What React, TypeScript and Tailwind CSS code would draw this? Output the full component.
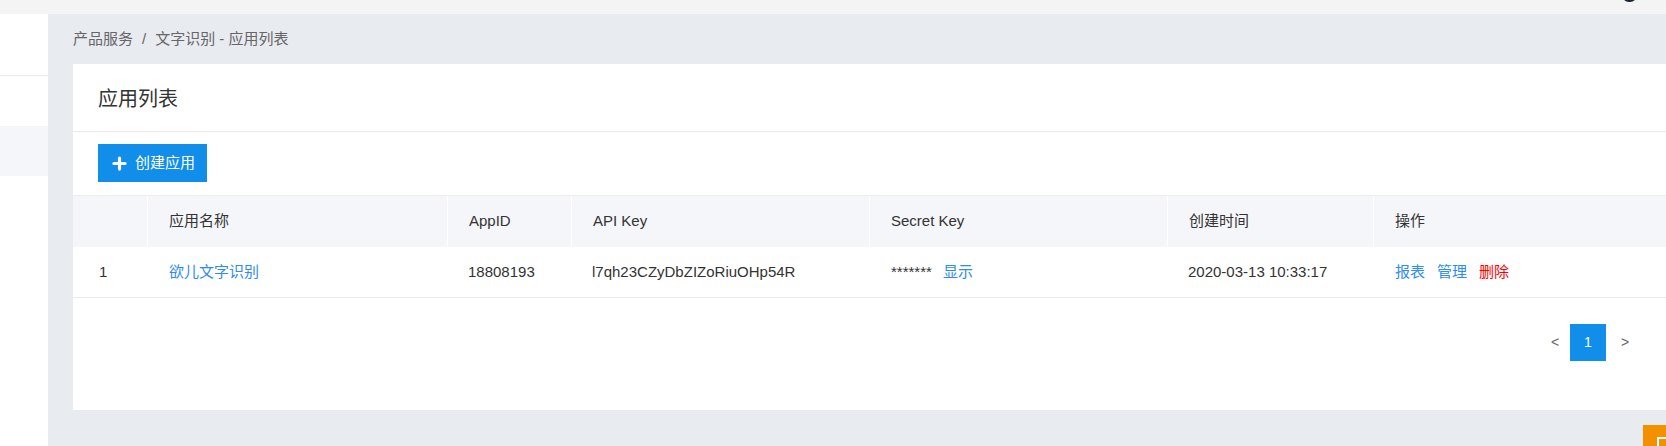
import { Plus } from 'lucide-react';

const cols = [
  { key: 'idx', title: '', w: 'w-[74px]' },
  { key: 'name', title: '应用名称', w: 'w-[300px]' },
  { key: 'appid', title: 'AppID', w: 'w-[124px]' },
  { key: 'apikey', title: 'API Key', w: 'w-[298px]' },
  { key: 'secret', title: 'Secret Key', w: 'w-[298px]' },
  { key: 'time', title: '创建时间', w: 'w-[206px]' },
  { key: 'ops', title: '操作', w: 'flex-1' },
];

const apps = [
  {
    idx: 1,
    name: '欲儿文字识别',
    appid: '18808193',
    apikey: 'l7qh23CZyDbZIZoRiuOHp54R',
    time: '2020-03-13 10:33:17',
  },
];

export default function App() {
  return (
    <div
      className="relative h-[446px] w-full overflow-hidden flex flex-col bg-[#e8ebf0] text-[#333]"
      style={{ fontFamily: '"Liberation Sans", Arial, "Noto Sans CJK SC", sans-serif' }}
    >
      {/* top bar */}
      <div className="relative h-[14px] shrink-0 bg-[#f4f4f4]">
        <div className="absolute left-[1622px] top-[-12px] w-[15px] h-[14px] rounded-full bg-[#1f2430]" />
      </div>

      <div className="flex flex-1 min-h-0">
        {/* sidebar */}
        <aside className="w-[48px] shrink-0 bg-white">
          <div className="h-[62px] border-b border-[#e8eaec]" />
          <div className="h-[50px]" />
          <div className="h-[50px] bg-[#f5f6fa]" />
        </aside>

        {/* main */}
        <main className="flex-1 min-w-0 pl-[25px]">
          <div className="h-[50px] flex items-center text-[15px] text-[#666]">
            <span>产品服务</span>
            <span className="mx-[9px]">/</span>
            <span>文字识别 - 应用列表</span>
          </div>

          <div className="bg-white h-[346px] flex flex-col">
            <div className="h-[68px] shrink-0 flex items-center px-[25px] pt-[2px] border-b border-[#e8eaec]">
              <h1 className="text-[20px] text-[#333]">应用列表</h1>
            </div>

            <div className="pt-[12px] pb-[13px] px-[25px]">
              <button className="h-[38px] w-[109px] bg-[#108ee9] text-white text-[15px] flex items-center justify-center gap-[6px]">
                <Plus size={19} strokeWidth={4} />
                <span>创建应用</span>
              </button>
            </div>

            {/* table */}
            <div className="border-t border-[#eceef2] text-[15px]">
              <div className="flex h-[51px] bg-[#f5f6fa]">
                {cols.map((c, i) => (
                  <div
                    key={c.key}
                    className={`${c.w} shrink-0 flex items-center pl-[21px] ${i > 0 ? 'border-l border-white' : ''} text-[#333]`}
                  >
                    {c.title}
                  </div>
                ))}
              </div>
              {apps.map(a => (
                <div key={a.idx} className="flex h-[51px] border-b border-[#e8eaec] items-center">
                  <div className="w-[74px] shrink-0 pl-[26px]">{a.idx}</div>
                  <div className="w-[300px] shrink-0 pl-[22px] text-[#2d8cf0]">{a.name}</div>
                  <div className="w-[124px] shrink-0 pl-[21px]">{a.appid}</div>
                  <div className="w-[298px] shrink-0 pl-[21px]">{a.apikey}</div>
                  <div className="w-[298px] shrink-0 pl-[22px] flex items-center gap-[11px]">
                    <span>*******</span>
                    <span className="text-[#2d8cf0]">显示</span>
                  </div>
                  <div className="w-[206px] shrink-0 pl-[21px]">{a.time}</div>
                  <div className="flex-1 pl-[22px] flex gap-[12px]">
                    <span className="text-[#2d8cf0]">报表</span>
                    <span className="text-[#2d8cf0]">管理</span>
                    <span className="text-[#ff0000]">删除</span>
                  </div>
                </div>
              ))}
            </div>

            {/* pagination */}
            <div className="flex justify-end items-center pt-[26px] pr-[26px] text-[14px] text-[#666]">
              <span className="w-[30px] text-center">&lt;</span>
              <span className="w-[36px] h-[37px] bg-[#108ee9] text-white flex items-center justify-center">1</span>
              <span className="w-[30px] ml-[4px] text-center">&gt;</span>
            </div>
          </div>
        </main>
      </div>

      {/* floating feedback button */}
      <div className="absolute left-[1643px] top-[425px] w-[40px] h-[40px] bg-[#f39000]">
        <div className="absolute left-[14px] top-[12px] w-[12px] h-[12px] border-2 border-white" />
      </div>
    </div>
  );
}
